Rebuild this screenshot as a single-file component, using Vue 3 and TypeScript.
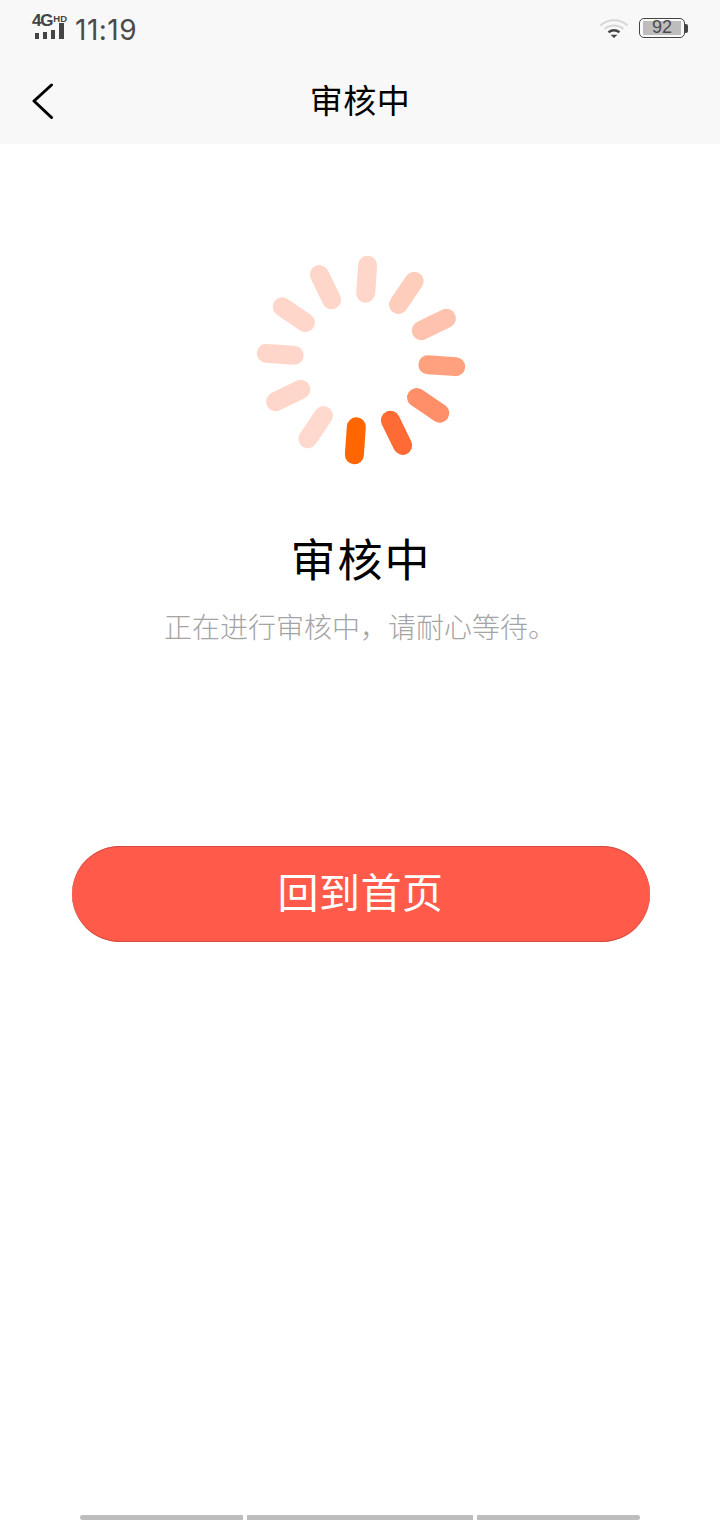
<script setup lang="ts">
const colors = ['#ff6600', '#ff6a35', '#ff8f68', '#ffa07e', '#ffc2ae', '#ffcdbc', '#ffd6c9', '#ffd6c9', '#ffd6c9', '#ffd6c9', '#ffd6c9', '#ffd9cd']
const spokes = colors.map((color, i) => ({ color, angle: 184 - i * 30 }))
</script>

<template>
  <div class="page">
    <header class="head">
      <div class="status">
        <div class="signal">
          <div class="net"><span class="g4">4G</span><span class="hd">HD</span></div>
          <div class="bars"><i class="b1"></i><i class="b2"></i><i class="b3"></i><i class="b4"></i></div>
        </div>
        <span class="time">11:19</span>
        <svg class="wifi" width="30" height="22" viewBox="0 0 30 22" fill="none">
          <path d="M1.5 8.5C9 1.5 21 1.5 28.500 8.500" stroke="#d6d6d6" stroke-width="2" />
          <path d="M5.500 12C11 7.300 19 7.300 24.500 12" stroke="#d6d6d6" stroke-width="2" />
          <path d="M9.500 15.300C12.800 12.800 17.200 12.800 20.500 15.300" stroke="#444" stroke-width="2.400" />
          <path d="M11.500 17.800H18.500L15 21Z" fill="#444" />
        </svg>
        <div class="battery">
          <div class="cell"><span class="level">92</span></div>
          <i class="nub"></i>
        </div>
      </div>
      <div class="nav">
        <svg class="back" width="24" height="36" viewBox="0 0 24 36" fill="none">
          <path d="M20.500 2L3 18L20.500 34.500" stroke="#000" stroke-width="3" stroke-linecap="round" stroke-linejoin="round" />
        </svg>
        <h1 class="nav-title">审核中</h1>
      </div>
    </header>

    <main class="body">
      <svg class="spinner" width="240" height="240" viewBox="-120 -120 240 240">
        <line
          v-for="s in spokes"
          :key="s.angle"
          x1="0"
          y1="-67"
          x2="0"
          y2="-95"
          :stroke="s.color"
          stroke-width="19"
          stroke-linecap="round"
          :transform="`rotate(${s.angle})`"
        />
      </svg>
      <h2 class="title">审核中</h2>
      <p class="desc">正在进行审核中，请耐心等待。</p>
      <button class="home" type="button"><span class="home-label">回到首页</span></button>
    </main>

    <footer class="indicator"><i class="s1"></i><i class="s2"></i><i class="s3"></i></footer>
  </div>
</template>

<style>
html, body { margin: 0; background: #fff; }
</style>

<style scoped>
.page {
  width: 720px;
  height: 1520px;
  display: flex;
  flex-direction: column;
  overflow: hidden;
  background: #fff;
  font-family: "Noto Sans CJK SC", "Noto Sans", sans-serif;
}
.head { background: #f8f8f8; height: 144px; }
.status {
  height: 60px;
  display: flex;
  align-items: center;
  padding: 0 32px 0 32px;
  color: #4a4a4a;
}
.signal { width: 34px; height: 24px; display: flex; flex-direction: column; align-self: flex-start; margin-top: 15px; }
.net { height: 8px; display: flex; align-items: flex-start; font-family: "Liberation Sans", sans-serif; font-weight: 700; color: #444; }
.g4 { font-size: 17px; line-height: 12px; letter-spacing: -1.200px; }
.hd { font-size: 9.500px; line-height: 8px; margin-left: 1px; }
.bars { display: flex; align-items: flex-end; gap: 4px; height: 16px; padding-left: 3px; }
.bars i { display: block; width: 4px; background: #444; }
.b1 { height: 6px; }
.b2 { height: 7px; }
.b3 { height: 9px; }
.b4 { height: 16px; width: 5px !important; }
.time { margin-left: 9px; font-family: "Inter", "Liberation Sans", sans-serif; font-size: 28px; line-height: 30px; letter-spacing: 0.500px; }
.wifi { margin-left: auto; margin-right: 10px; margin-top: -4px; }
.battery { display: flex; align-items: center; margin-top: -4px; }
.cell {
  box-sizing: border-box;
  width: 46px;
  height: 20px;
  border: 1.500px solid #444;
  border-radius: 5px;
  padding: 2px 3px;
  display: flex;
}
.level {
  flex: none;
  width: 38px;
  background: #bdbdbd;
  font-family: "Liberation Sans", sans-serif;
  font-size: 18px;
  line-height: 13px;
  text-align: center;
  color: #4a4a4a;
}
.nub { display: block; width: 3px; height: 9px; background: #444; border-radius: 0 2px 2px 0; }
.nav { position: relative; height: 84px; display: flex; align-items: center; justify-content: center; }
.back { position: absolute; left: 31px; top: 23px; }
.nav-title { margin: -6px 0 0; font-size: 33px; line-height: 84px; font-weight: 400; letter-spacing: 0.500px; color: #000; }
.body { flex: 1; display: flex; flex-direction: column; align-items: center; }
.spinner { display: block; margin: 96px 0 0 2px; }
.title { margin: 50px 0 0 2px; font-size: 45px; line-height: 56px; font-weight: 400; letter-spacing: 2px; color: #000; }
.desc { margin: 20px 0 0; font-size: 28px; line-height: 40px; font-weight: 300; color: #a4a4a4; }
.home {
  box-sizing: border-box;
  display: block;
  width: 578px;
  height: 96px;
  margin: 200px 0 0 1px;
  border: 0;
  border-radius: 48px;
  background: #ff5a4a;
  box-shadow: inset 0 1px 0 #cf4c40, inset 0 -1px 0 #cf4c40;
  color: #fff;
  font-family: inherit;
  font-size: 41px;
  padding: 0;
}
.home-label { display: block; line-height: 88px; height: 96px; letter-spacing: 0.500px; }
.indicator { height: 5px; margin-bottom: 0; display: flex; gap: 4px; padding: 0 80px; }
.indicator i { display: block; height: 5px; background: #bdbdbd; }
.s1 { width: 163px; border-radius: 3px 0 0 3px; }
.s2 { width: 226px; }
.s3 { width: 163px; border-radius: 0 3px 3px 0; }
</style>
